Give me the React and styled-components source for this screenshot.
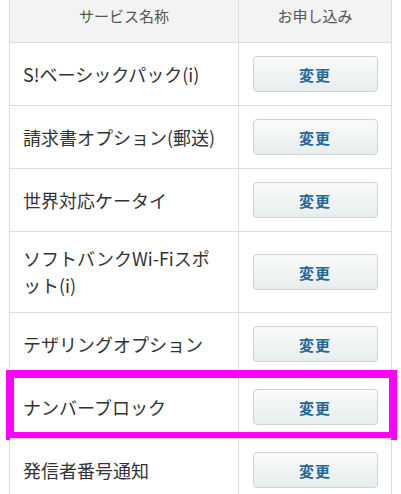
import styled, { createGlobalStyle } from "styled-components";

const Global = createGlobalStyle`
    html, body {
        margin: 0;
        padding: 0;
        background: #ffffff;
        font-family: "Noto Sans CJK JP", "Noto Sans", sans-serif;
    }
`;

const services = [
    { name: "S!ベーシックパック(i)" },
    { name: "請求書オプション(郵送)" },
    { name: "世界対応ケータイ" },
    { name: "ソフトバンクWi-Fiスポット(i)" },
    { name: "テザリングオプション" },
    { name: "ナンバーブロック", marked: true },
    { name: "発信者番号通知" },
];

const Page = styled.div`
    width: 401px;
    height: 494px;
    overflow: hidden;
    padding-left: 9px;
    box-sizing: border-box;
`;

const Table = styled.div`
    width: 383px;
    border-left: 1px solid #dcdce4;
    border-right: 1px solid #dcdce4;
    box-sizing: border-box;
`;

const Row = styled.div`
    position: relative;
    display: grid;
    grid-template-columns: 228px 1fr;
    border-top: ${(p) => (p.$head ? "none" : "1px solid #dcdce4")};
    background: ${(p) => (p.$head ? "#f3f3f3" : "#ffffff")};

    ${(p) =>
        p.$marked &&
        `
        &::after {
            content: "";
            position: absolute;
            left: -4px;
            right: -6px;
            top: -6px;
            bottom: -2px;
            border: 8px solid #ff00ff;
            pointer-events: none;
        }
    `}
`;

const HeadCell = styled.div`
    height: 42px;
    box-sizing: border-box;
    padding-top: 6px;
    text-align: center;
    font-size: 15px;
    line-height: 20px;
    color: #555555;
    border-left: ${(p) => (p.$divided ? "1px solid #dcdce4" : "none")};
`;

const NameCell = styled.div`
    display: flex;
    align-items: center;
    padding: 13px 16px 13px 13px;
    font-size: 18px;
    line-height: 27px;
    color: #333333;
`;

const ActionCell = styled.div`
    display: flex;
    align-items: center;
    justify-content: center;
    padding: 13px 0;
    border-left: 1px solid #dcdce4;
`;

const ChangeButton = styled.button`
    width: 125px;
    height: 36px;
    padding: 0;
    border: 1px solid #cfd3d3;
    border-radius: 4px;
    background: linear-gradient(#fbfbfb, #f1f4f4 50%, #e7eded);
    font-family: inherit;
    font-size: 15px;
    font-weight: bold;
    letter-spacing: 1px;
    color: #24679a;
`;

function App()
{
    return (
        <>
            <Global />
            <Page>
                <Table>
                    <Row $head>
                        <HeadCell>サービス名称</HeadCell>
                        <HeadCell $divided>お申し込み</HeadCell>
                    </Row>
                    {services.map((s) => (
                        <Row key={s.name} $marked={s.marked}>
                            <NameCell>{s.name}</NameCell>
                            <ActionCell>
                                <ChangeButton>変更</ChangeButton>
                            </ActionCell>
                        </Row>
                    ))}
                </Table>
            </Page>
        </>
    );
}

export default App;
